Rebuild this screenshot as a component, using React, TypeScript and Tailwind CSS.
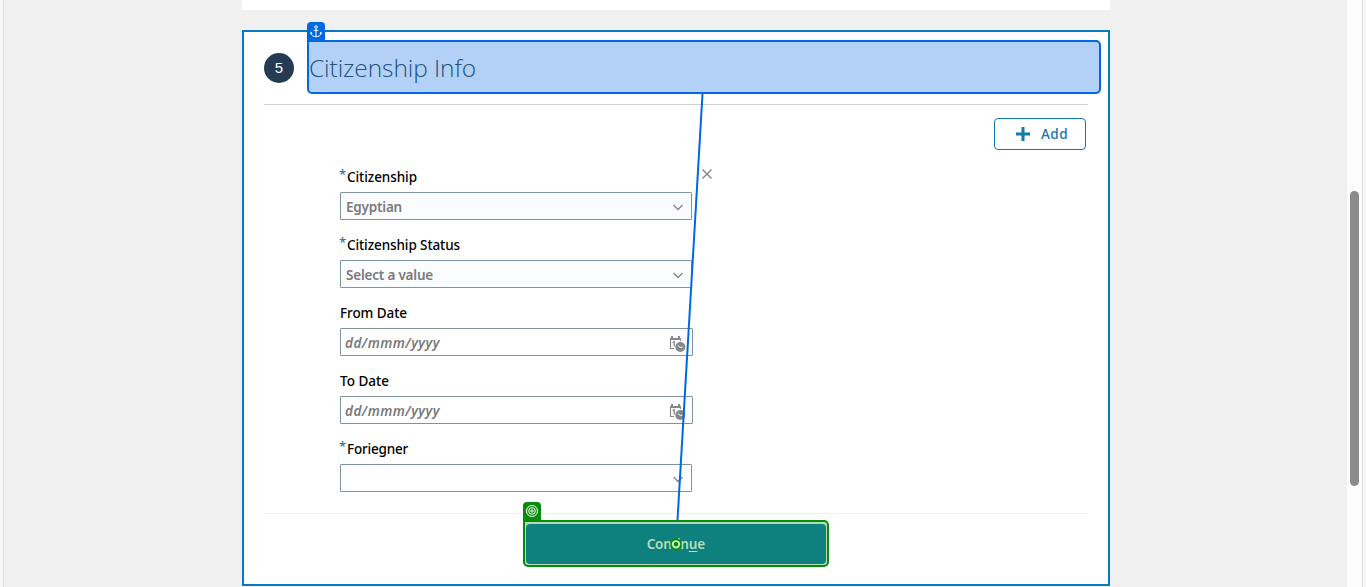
import React from "react";

function Chevron() {
  return (
    <svg width="10" height="7" viewBox="0 0 10 7" fill="none" stroke="#858585" strokeWidth="1.3" className="mr-[8px] mt-[2px]">
      <path d="M.5 1 L5 5.5 L9.5 1" />
    </svg>
  );
}

function CalendarClock() {
  return (
    <svg width="17" height="16" viewBox="0 0 17 16" className="mr-[6px] mt-[3px]">
      <path d="M1.500 3V12.500H5M11.500 3V5" fill="none" stroke="#85898c" strokeWidth="1.100" />
      <path d="M1 2h11v2H1zM2 0h2v3H2zM9 0h2v3H9z" fill="#85898c" />
      <path d="M3.600 6.700L5.200 5.700V10.500" fill="none" stroke="#85898c" strokeWidth="1.300" />
      <circle cx="11.300" cy="11" r="5" fill="#85898c" />
      <path d="M8.800 9.500L11.300 11.500L13.800 11" fill="none" stroke="#fff" strokeWidth="1" />
    </svg>
  );
}

type FieldProps = {
  label: string;
  value?: string;
  required?: boolean;
  date?: boolean;
  tinted?: boolean;
  labelWidth: number;
  valueWidth?: number;
};

function FitText({ text, width, italic }: { text: string; width: number; italic?: boolean }) {
  const ref = React.useRef<HTMLSpanElement>(null);
  const [spacing, setSpacing] = React.useState(0);
  React.useLayoutEffect(() => {
    if (ref.current) setSpacing((width - ref.current.getBoundingClientRect().width) / text.length);
  }, [text, width]);
  return (
    <span ref={ref} className={italic ? "italic whitespace-nowrap" : "whitespace-nowrap"} style={{ letterSpacing: spacing }}>
      {text}
    </span>
  );
}

function Field({ label, value, required, date, tinted, labelWidth, valueWidth = 0 }: FieldProps) {
  return (
    <div className="mb-3 h-14">
      <div className="flex h-7 items-center pb-[3px] text-[13.5px] leading-[18px] font-medium text-black">
        {required && <span className="mr-px w-[6px] -mt-[6px] -ml-px pr-px text-[13px] font-normal text-[#1467a8]">*</span>}
        <span className={required ? "ml-px flex" : "flex"}><FitText text={label} width={labelWidth} /></span>
      </div>
      <div
        className={
          "flex h-7 items-center justify-between rounded-[1px] border border-[#7d939f] text-[13.5px] leading-[18px] font-semibold text-[#7a7a7a] " +
          (date ? "w-[353px] pl-[4px] " : "w-[352px] pl-[5px] ") +
          (tinted ? "bg-[#fbfcfe]" : "bg-white")
        }
      >
        <span className={date ? "flex pt-[2px]" : "flex pt-px"}>{value && <FitText text={value} width={valueWidth} italic={date} />}</span>
        {date ? <CalendarClock /> : <Chevron />}
      </div>
    </div>
  );
}

export default function App() {
  return (
    <div className="relative flex h-[587px] w-[1366px] overflow-hidden bg-[#f0f0f0] font-['Noto_Sans','Open_Sans',sans-serif]">
      <div className="w-1 shrink-0 border-r border-[#dfdfdf] bg-[#f7f7f7]" />
      <main className="flex flex-1 flex-col items-start pl-[238px]">
        <div className="mb-5 h-[10px] w-[868px] shrink-0 bg-white" />
        <section className="flex h-[556px] w-[868px] shrink-0 flex-col border-2 border-[#047cc4] bg-white">
          <header className="ml-5 mr-[7px] flex h-[72px] shrink-0 pt-2">
            <div className="mt-[13px] flex size-[30px] items-center justify-center rounded-full bg-[#253b53] font-['Liberation_Sans',sans-serif] text-[15px] text-white">
              5
            </div>
            <div className="relative ml-[13px] flex h-[54px] w-[794px] items-center rounded-[5px] rounded-tl-none border-2 border-[#0068e0] bg-[#b3d1f6]">
              <div className="absolute -left-[2px] -top-5 flex h-[19px] w-[18px] items-center justify-center rounded-t-[4px] bg-[#0068e0]">
                <svg width="12" height="13" viewBox="0 0 12 13" fill="none" stroke="white" strokeWidth="1">
                  <circle cx="6" cy="2" r="1.300" />
                  <path d="M6 3.500V11.500M3.700 5.300H8.300M1 7.500V8.500C1.500 10.600 3.500 11.700 6 11.700S10.500 10.600 11 8.500V7.500M.6 9L1 7.400L2.300 8.500M9.700 8.500L11 7.400L11.400 9" />
                </svg>
              </div>
              <h1 className="pt-[2px] font-['Open_Sans','Noto_Sans',sans-serif] text-[24.5px] font-light leading-none text-[#20527f]">
                <FitText text="Citizenship Info" width={167} />
              </h1>
            </div>
          </header>
          <div className="mx-5 flex h-[410px] shrink-0 flex-col border-b border-t border-b-[#eeeeee] border-t-[#cfcfcf]">
            <div className="mr-[2px] mt-[13px] flex h-8 w-[92px] shrink-0 items-center self-end rounded-[4px] border border-[#127bab] pl-[21px] text-[13.5px] leading-[18px] font-medium text-[#1477a5]">
              <svg width="14" height="14" viewBox="0 0 14 14" stroke="#127bab" strokeWidth="3">
                <path d="M7 0V14M0 7H14" />
              </svg>
              <span className="ml-[11px] flex"><FitText text="Add" width={27} /></span>
            </div>
            <div className="ml-[76px] mt-[14px] flex items-start">
              <div className="w-[353px] shrink-0">
                <Field label="Citizenship" labelWidth={70} value="Egyptian" valueWidth={56} required tinted />
                <Field label="Citizenship Status" labelWidth={113} value="Select a value" valueWidth={87} required tinted />
                <Field label="From Date" labelWidth={67} value="dd/mmm/yyyy" valueWidth={95} date />
                <Field label="To Date" labelWidth={49} value="dd/mmm/yyyy" valueWidth={95} date />
                <Field label="Foriegner" labelWidth={61} required />
              </div>
              <svg width="10" height="10" viewBox="0 0 10 10" stroke="#858b8f" strokeWidth="1.500" className="ml-[9px] mt-[5px]">
                <path d="M.5 .5L9.500 9.500M9.500 .5L.5 9.500" />
              </svg>
            </div>
          </div>
          <div className="relative ml-[279px] mt-[6px] h-[47px] w-[306px] rounded-[5px] rounded-tl-none border-2 border-[#068b0b] bg-[#b4dcb6] px-px pb-px pt-[2px]">
            <button className="flex h-full w-full items-center justify-center rounded-[4px] bg-[#0e817f] text-[13.500px] font-semibold text-[#b4dcb6]">
              <FitText text="Contin" width={42} />
              <span className="underline underline-offset-2">u</span>e
            </button>
            <div className="absolute -left-[2px] -top-5 flex h-[19px] w-[18px] items-center justify-center rounded-t-[4px] bg-[#068b0b] pb-px">
              <svg width="12" height="12" viewBox="0 0 12 12" fill="none" stroke="white" strokeWidth="1">
                <circle cx="6" cy="6" r="5.500" />
                <circle cx="6" cy="6" r="3.300" />
                <circle cx="6" cy="6" r="1.200" />
              </svg>
            </div>
          </div>
        </section>
      </main>
      <div className="flex w-[15px] shrink-0 justify-center bg-[#fcfcfc] pt-[191px]">
        <div className="h-[295px] w-[9px] rounded-full bg-[#8b8b8b]" />
      </div>
      <div className="w-1 shrink-0 border-l border-[#dfdfdf] bg-[#f7f7f7]" />
      <svg className="pointer-events-none absolute left-0 top-0" width="1366" height="587" fill="none">
        <path d="M702.500 94L677.500 520" stroke="#0068e0" strokeWidth="2" />
        <path d="M676 537.500L681.500 541V547.500L676 551L670.500 547.500V541Z" fill="#068b0b" />
        <circle cx="676" cy="544.300" r="3.200" fill="#068b0b" stroke="#c9ecd0" strokeWidth="1.900" />
      </svg>
    </div>
  );
}
